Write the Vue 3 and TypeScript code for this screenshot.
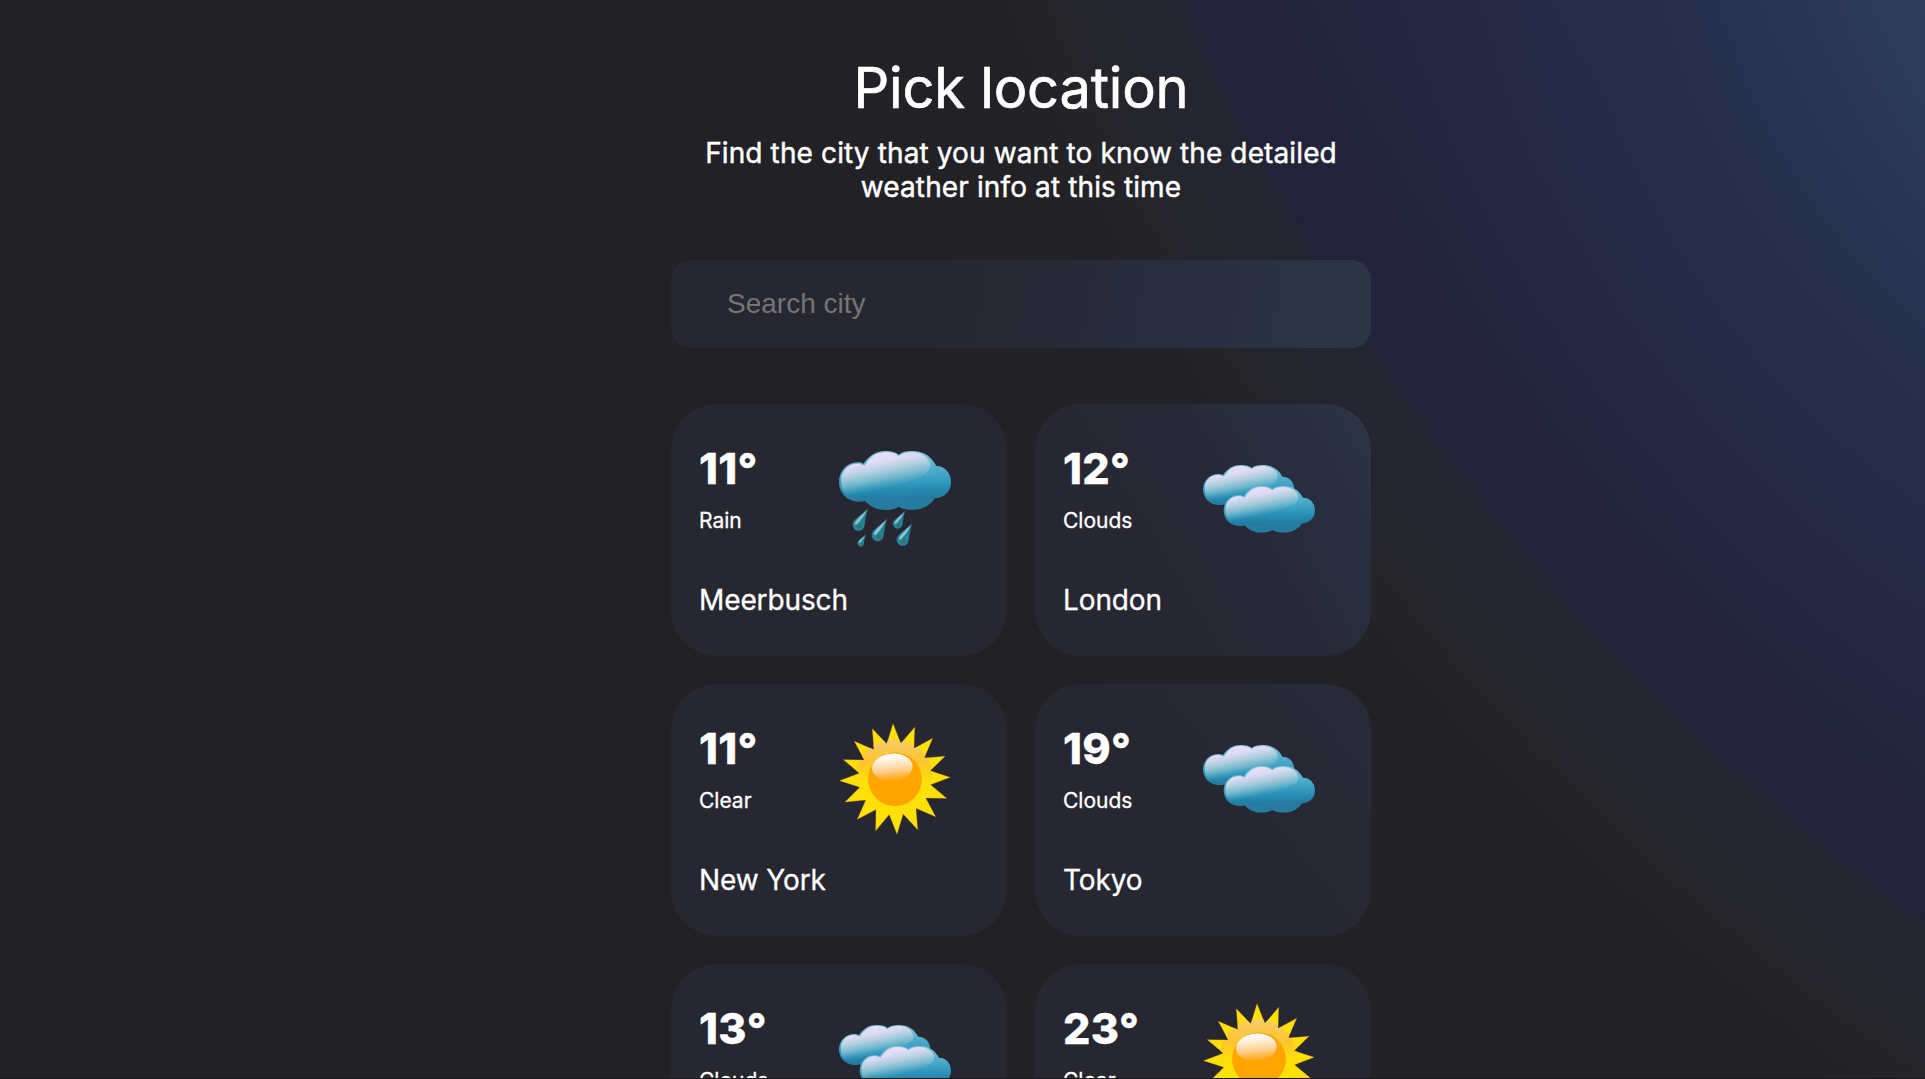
<script setup lang="ts">
type Kind = 'Rain' | 'Clouds' | 'Clear'
interface City {
  name: string
  temp: number
  kind: Kind
  tone: string
}

const cities: City[] = [
  { name: 'Meerbusch', temp: 11, kind: 'Rain', tone: 'dim' },
  { name: 'London', temp: 12, kind: 'Clouds', tone: 'bright' },
  { name: 'New York', temp: 11, kind: 'Clear', tone: 'dim' },
  { name: 'Tokyo', temp: 19, kind: 'Clouds', tone: 'medium' },
  { name: '', temp: 13, kind: 'Clouds', tone: 'dim' },
  { name: '', temp: 23, kind: 'Clear', tone: 'dim' },
]

const cloud =
  'M130 102C150 74 170 63 197 63C214 63 228 67 236 74C246 66 260 63 275 63C312 63 335 80 349 108C376 108 393 130 393 156C393 185 374 203 345 205C330 228 305 240 275 240C260 240 246 236 236 230C226 237 212 240 197 240C170 240 150 230 135 213C128 215 120 215 112 215C80 213 57 188 57 156C57 120 85 94 118 97C123 98 127 99 130 102Z'
const sheen =
  'M64 158C60 125 83 101 113 101C124 102 130 105 134 107C152 79 170 67 197 67C214 67 228 71 236 79C246 70 260 67 275 67C308 67 331 86 332 108C328 136 290 148 250 158C200 170 130 195 88 200C71 190 64 175 64 158Z'
const drop = 'M29 -52C24 -30 20 -20 18 0A18 18 0 1 1 -14 -12C-5 -24 12 -34 29 -52Z'
const dropShine = 'M25 -45C12 -32 -2 -22 -10 -9C-14 0 -8 2 -2 -5C8 -17 18 -27 25 -45Z'
const drops = [
  [116, 285, 1],
  [173, 316, 1],
  [233, 282, 0.8],
  [248, 330, 1],
  [122, 340, 0.54],
]

// Sun rays: tips joined through valleys on an inner circle
const tips = [
  [219, 41], [284, 52], [338, 85], [375, 139], [390, 202], [380, 265], [347, 320], [293, 359],
  [231, 373], [167, 362], [112, 328], [75, 276], [59, 212], [70, 149], [103, 94], [157, 56],
]
const cx = 225
const cy = 207
const rays = tips
  .map(([x, y], i) => {
    const [nx, ny] = tips[(i + 1) % tips.length]
    const a = Math.atan2((y + ny) / 2 - cy, (x + nx) / 2 - cx)
    return `${x},${y} ${(cx + 108 * Math.cos(a)).toFixed(1)},${(cy + 108 * Math.sin(a)).toFixed(1)}`
  })
  .join(' ')
</script>

<template>
  <div class="page">
    <svg class="defs" width="0" height="0" aria-hidden="true">
      <defs>
        <linearGradient id="cloudBase" x1="0" y1="0" x2="0.06" y2="1">
          <stop offset="0" stop-color="#8ccbdc" />
          <stop offset="0.3" stop-color="#58b0ce" />
          <stop offset="0.5" stop-color="#3ca0c4" />
          <stop offset="0.72" stop-color="#2389af" />
          <stop offset="0.82" stop-color="#267da1" />
          <stop offset="1" stop-color="#267b9f" />
        </linearGradient>
        <linearGradient id="cloudSheen" gradientUnits="userSpaceOnUse" x1="190" y1="66" x2="212" y2="174">
          <stop offset="0" stop-color="#ebe0fb" />
          <stop offset="0.25" stop-color="#dcdaf3" />
          <stop offset="0.5" stop-color="#accddd" />
          <stop offset="0.72" stop-color="#80bed0" stop-opacity="0.8" />
          <stop offset="1" stop-color="#4fa9c9" stop-opacity="0" />
        </linearGradient>
        <linearGradient id="dropFill" x1="0" y1="0" x2="0" y2="1">
          <stop offset="0" stop-color="#28586c" />
          <stop offset="0.5" stop-color="#247f99" />
          <stop offset="1" stop-color="#2688a4" />
        </linearGradient>
        <radialGradient id="dropShade">
          <stop offset="0" stop-color="#36705b" />
          <stop offset="1" stop-color="#2a7982" stop-opacity="0" />
        </radialGradient>
        <linearGradient id="sunGlow" x1="0" y1="0" x2="0" y2="1">
          <stop offset="0" stop-color="#f8cb69" />
          <stop offset="0.3" stop-color="#fcc52d" />
          <stop offset="0.65" stop-color="#fbdf0a" stop-opacity="0" />
        </linearGradient>
        <linearGradient id="sunSheen" x1="0" y1="0" x2="0" y2="1">
          <stop offset="0" stop-color="#ffffff" />
          <stop offset="0.2" stop-color="#fff5e6" />
          <stop offset="0.65" stop-color="#ffcc87" />
          <stop offset="1" stop-color="#ffac20" stop-opacity="0.5" />
        </linearGradient>
        <clipPath id="sunClip"><polygon :points="rays" /></clipPath>
      </defs>
    </svg>

    <main class="content">
      <h1>Pick location</h1>
      <p class="lead">Find the city that you want to know the detailed weather info at this time</p>
      <input class="search" type="text" placeholder="Search city" />

      <div class="grid">
        <article v-for="(c, n) in cities" :key="n" class="card" :class="c.tone">
          <div class="info">
            <div class="temp">{{ c.temp }}°</div>
            <div class="kind">{{ c.kind }}</div>
            <div v-if="c.name" class="city">{{ c.name }}</div>
          </div>
          <svg v-if="c.kind === 'Rain'" class="icon" viewBox="57 39 336 336">
            <path :d="cloud" fill="url(#cloudBase)" />
            <path :d="sheen" fill="url(#cloudSheen)" />
            <g v-for="([x, y, s], i) in drops" :key="i" :transform="`translate(${x} ${y}) scale(${s})`">
              <path :d="drop" fill="url(#dropFill)" />
              <circle cx="3" cy="4" r="14" fill="url(#dropShade)" />
              <path :d="dropShine" fill="#a4d8d8" fill-opacity="0.8" />
            </g>
          </svg>
          <svg v-else-if="c.kind === 'Clouds'" class="icon" viewBox="69 9 336 336">
            <g v-for="([x, y], i) in [[69, 75], [131, 138]]" :key="i" :transform="`translate(${x} ${y}) scale(0.815 0.79) translate(-57 -63)`">
              <path :d="cloud" fill="url(#cloudBase)" />
              <path :d="sheen" fill="url(#cloudSheen)" />
            </g>
          </svg>
          <svg v-else class="icon" viewBox="57 39 336 336">
            <polygon :points="rays" fill="#fde006" stroke="#e99a20" stroke-width="1.5" stroke-opacity="0.6" />
            <circle cx="222" cy="205" r="117" fill="url(#sunGlow)" clip-path="url(#sunClip)" />
            <circle cx="225" cy="208" r="80.5" fill="#ffa400" />
            <ellipse cx="217" cy="172" rx="61" ry="41" fill="url(#sunSheen)" transform="rotate(-5 217 172)" />
          </svg>
        </article>
      </div>
    </main>
    <div class="edge"></div>
  </div>
</template>

<style>
body {
  margin: 0;
  overflow: hidden;
  background: #222125;
}
</style>

<style scoped>
.page {
  position: relative;
  box-sizing: border-box;
  width: 100%;
  height: 1079px;
  overflow: hidden;
  padding: 54px 0 0 671px;
  color: #fff;
  font-family: Inter, sans-serif;
  -webkit-text-stroke: 0.3px #fff;
  background:
    radial-gradient(
      ellipse 1000px 1050px at 2350px -200px,
      rgba(49, 64, 96, 1) 0%,
      rgba(49, 64, 96, 0.98) 42%,
      rgba(43, 56, 86, 0.75) 60%,
      rgba(38, 48, 78, 0.4) 80%,
      rgba(34, 40, 66, 0) 100%
    ),
    radial-gradient(
      circle 2500px at 3250px -906px,
      #252a49 0,
      #252a49 70%,
      #23263f 83%,
      #222339 90.2%,
      #25252f 90.7%,
      #25252f 93%,
      #242429 95.5%,
      #222125 98.5%
    );
}
.defs {
  position: absolute;
}
.content {
  width: 700px;
}
h1 {
  margin: 0;
  font-size: 56px;
  line-height: 68px;
  font-weight: 400;
  letter-spacing: -0.2px;
  -webkit-text-stroke: 0.7px #fff;
  text-align: center;
}
.lead {
  margin: 14px auto 0;
  width: 660px;
  font-size: 28px;
  line-height: 34px;
  letter-spacing: 0.12px;
  -webkit-text-stroke: 0.45px #fff;
  text-align: center;
}
.search {
  display: block;
  box-sizing: border-box;
  width: 700px;
  height: 88px;
  margin: 56px 0 0;
  padding: 0 56px;
  border: 0;
  border-radius: 20px;
  outline: 0;
  color: #fff;
  font: 28px/34px 'Liberation Sans', sans-serif;
  -webkit-text-stroke: 0;
  background: linear-gradient(100deg, #272731 0%, #272731 38%, #272a3a 62%, #2b3344 88%, #2c3447 100%);
}
.search::placeholder {
  color: #757575;
  opacity: 1;
}
.grid {
  display: grid;
  grid-template-columns: 336px 336px;
  grid-auto-rows: 252px;
  gap: 28px;
  margin-top: 56px;
}
.card {
  box-sizing: border-box;
  display: flex;
  justify-content: space-between;
  padding: 39px 56px 0 28px;
  border-radius: 46px;
  background: #272731;
}
.card.bright {
  background: linear-gradient(60deg, #272731 25%, #272938 60%, #2b3345 95%);
}
.card.medium {
  background: linear-gradient(50deg, #272731 50%, #282a38 90%);
}
.info {
  width: 130px;
  white-space: nowrap;
}
.temp {
  margin-top: -1px;
  font-size: 43px;
  line-height: 52px;
  font-weight: 800;
  letter-spacing: 0.3px;
}
.kind {
  margin-top: 14px;
  font-size: 21px;
  line-height: 26px;
}
.city {
  margin-top: 49px;
  font-size: 28px;
  line-height: 34px;
  letter-spacing: -0.12px;
}
.icon {
  flex: none;
  width: 112px;
  height: 112px;
}
.edge {
  position: absolute;
  left: 0;
  right: 0;
  bottom: 0;
  height: 1px;
  background: #19171b;
}
</style>
